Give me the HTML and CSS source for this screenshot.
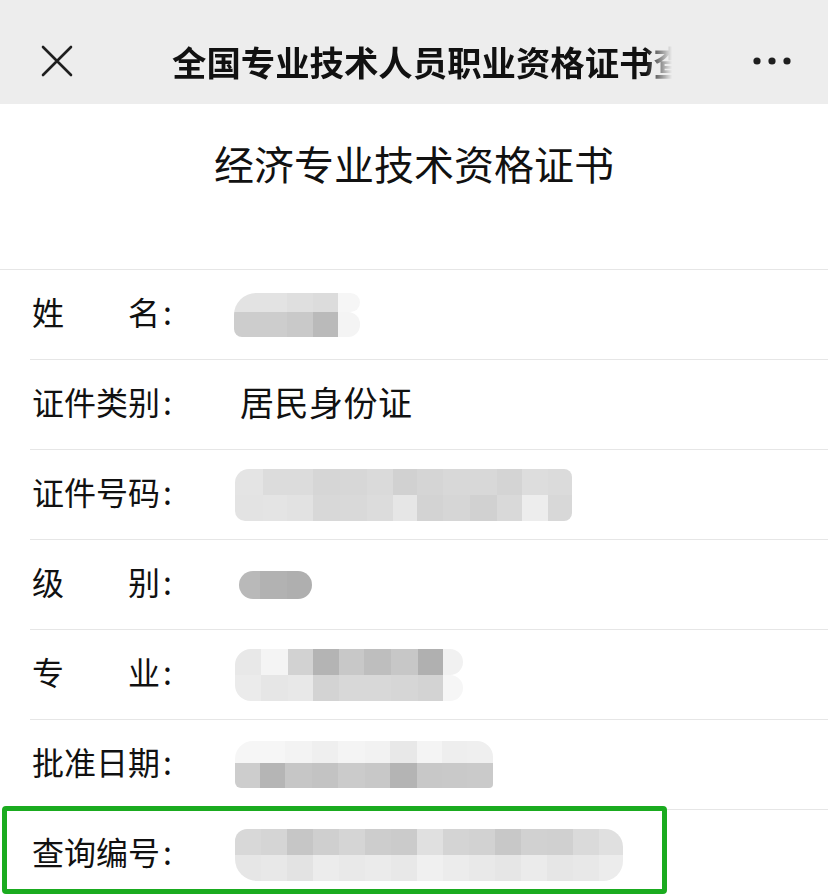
FILE: index.html
```html
<!DOCTYPE html>
<html lang="zh-CN">
<head>
<meta charset="utf-8">
<title>经济专业技术资格证书</title>
<link rel="stylesheet" href="styles.css">
</head>
<body>
<div class="page">
  <header class="topbar">
    <svg class="close" width="32" height="32" viewBox="0 0 32 32" aria-hidden="true">
      <path d="M2 2 L30 30 M30 2 L2 30" stroke="#1f1f1f" stroke-width="2.6" stroke-linecap="round" fill="none"/>
    </svg>
    <div class="title">全国专业技术人员职业资格证书查询</div>
    <svg class="more" width="38" height="10" viewBox="0 0 38 10" aria-hidden="true">
      <circle cx="4" cy="5" r="3.6" fill="#1f1f1f"/>
      <circle cx="19" cy="5" r="3.6" fill="#1f1f1f"/>
      <circle cx="34" cy="5" r="3.6" fill="#1f1f1f"/>
    </svg>
  </header>

  <h1 class="heading">经济专业技术资格证书</h1>

  <div class="list">
    <div class="row">
      <div class="label"><span class="name"><span>姓</span><span>名</span></span><span class="colon">:</span></div>
      <div class="blur blur-name">
        <div class="brow top"><i style="width:53px;background:#e3e3e3"></i><i style="width:26px;background:#dfdfdf"></i><i style="width:25px;background:#dcdcdc"></i><i class="fade" style="width:22px;background:#f6f6f6"></i></div>
        <div class="brow bot"><i style="width:53px;background:#cdcdcd"></i><i style="width:26px;background:#c9c9c9"></i><i style="width:25px;background:#bababa"></i><i class="fade" style="width:22px;background:#f4f4f4"></i></div>
      </div>
    </div>
    <div class="row">
      <div class="label"><span class="name"><span>证</span><span>件</span><span>类</span><span>别</span></span><span class="colon">:</span></div>
      <div class="value">居民身份证</div>
    </div>
    <div class="row">
      <div class="label"><span class="name"><span>证</span><span>件</span><span>号</span><span>码</span></span><span class="colon">:</span></div>
      <div class="blur blur-id">
        <div class="brow"><i style="width:28px;background:#e4e4e4"></i><i style="width:24px;background:#dcdcdc"></i><i style="width:26px;background:#dcdcdc"></i><i style="width:27px;background:#d6d6d6"></i><i style="width:27px;background:#d7d7d7"></i><i style="width:26px;background:#dadada"></i><i style="width:24px;background:#d1d1d1"></i><i style="width:26px;background:#d5d5d5"></i><i style="width:27px;background:#d8d8d8"></i><i style="width:27px;background:#d8d8d8"></i><i style="width:25px;background:#d4d4d4"></i><i style="width:26px;background:#dddddd"></i><i style="width:24px;background:#dbdbdb"></i></div>
        <div class="brow"><i style="width:28px;background:#e3e3e3"></i><i style="width:24px;background:#e4e4e4"></i><i style="width:26px;background:#e2e2e2"></i><i style="width:27px;background:#d8d8d8"></i><i style="width:27px;background:#d9d9d9"></i><i style="width:26px;background:#dcdcdc"></i><i style="width:24px;background:#e6e6e6"></i><i style="width:26px;background:#d3d3d3"></i><i style="width:27px;background:#d6d6d6"></i><i style="width:27px;background:#d1d1d1"></i><i style="width:25px;background:#d9d9d9"></i><i style="width:26px;background:#ededed"></i><i style="width:24px;background:#d8d8d8"></i></div>
      </div>
    </div>
    <div class="row">
      <div class="label"><span class="name"><span>级</span><span>别</span></span><span class="colon">:</span></div>
      <div class="blur blur-level">
        <div class="brow"><i style="width:21px;background:#b9b9b9"></i><i style="width:27px;background:#b2b2b2"></i><i style="width:25px;background:#afafaf"></i></div>
      </div>
    </div>
    <div class="row">
      <div class="label"><span class="name"><span>专</span><span>业</span></span><span class="colon">:</span></div>
      <div class="blur blur-major">
        <div class="brow"><i style="width:26px;background:#e8e8e8"></i><i style="width:27px;background:#f4f4f4"></i><i style="width:25px;background:#d2d2d2"></i><i style="width:26px;background:#b4b4b4"></i><i style="width:25px;background:#c8c8c8"></i><i style="width:27px;background:#bebebe"></i><i style="width:27px;background:#c7c7c7"></i><i style="width:25px;background:#b0b0b0"></i><i class="ext" style="width:20px;background:#f1f1f1"></i></div>
        <div class="brow"><i style="width:26px;background:#ebebeb"></i><i style="width:27px;background:#e6e6e6"></i><i style="width:25px;background:#e8e8e8"></i><i style="width:26px;background:#d3d3d3"></i><i style="width:25px;background:#d8d8d8"></i><i style="width:27px;background:#d8d8d8"></i><i style="width:27px;background:#d6d6d6"></i><i style="width:25px;background:#d3d3d3"></i><i class="ext" style="width:20px;background:#f6f6f6"></i></div>
      </div>
    </div>
    <div class="row">
      <div class="label"><span class="name"><span>批</span><span>准</span><span>日</span><span>期</span></span><span class="colon">:</span></div>
      <div class="blur blur-date">
        <div class="brow"><i style="width:25px;background:#f6f6f6"></i><i style="width:25px;background:#f6f6f6"></i><i style="width:27px;background:#f3f3f3"></i><i style="width:26px;background:#efefef"></i><i style="width:27px;background:#f4f4f4"></i><i style="width:25px;background:#f2f2f2"></i><i style="width:27px;background:#e8e8e8"></i><i style="width:25px;background:#f4f4f4"></i><i style="width:25px;background:#eeeeee"></i><i style="width:26px;background:#efefef"></i></div>
        <div class="brow"><i style="width:25px;background:#cdcdcd"></i><i style="width:25px;background:#b5b5b5"></i><i style="width:27px;background:#c6c6c6"></i><i style="width:26px;background:#c3c3c3"></i><i style="width:27px;background:#cbcbcb"></i><i style="width:25px;background:#c8c8c8"></i><i style="width:27px;background:#b4b4b4"></i><i style="width:25px;background:#c8c8c8"></i><i style="width:25px;background:#c9c9c9"></i><i style="width:26px;background:#cacaca"></i></div>
      </div>
    </div>
    <div class="row">
      <div class="label"><span class="name"><span>查</span><span>询</span><span>编</span><span>号</span></span><span class="colon">:</span></div>
      <div class="blur blur-query">
        <div class="brow"><i style="width:26px;background:#d8d8d8"></i><i style="width:26px;background:#d5d5d5"></i><i style="width:26px;background:#c6c6c6"></i><i style="width:26px;background:#cfcfcf"></i><i style="width:26px;background:#d5d5d5"></i><i style="width:26px;background:#cdcdcd"></i><i style="width:26px;background:#cbcbcb"></i><i style="width:26px;background:#e0e0e0"></i><i style="width:26px;background:#d4d4d4"></i><i style="width:26px;background:#d2d2d2"></i><i style="width:26px;background:#c8c8c8"></i><i style="width:26px;background:#d1d1d1"></i><i style="width:26px;background:#d0d0d0"></i><i style="width:26px;background:#dadada"></i><i style="width:24px;background:#e0e0e0"></i></div>
        <div class="brow"><i style="width:26px;background:#e6e6e6"></i><i style="width:26px;background:#e8e8e8"></i><i style="width:26px;background:#e3e3e3"></i><i style="width:26px;background:#ececec"></i><i style="width:26px;background:#e9e9e9"></i><i style="width:26px;background:#ebebeb"></i><i style="width:26px;background:#e8e8e8"></i><i style="width:26px;background:#f0f0f0"></i><i style="width:26px;background:#ececec"></i><i style="width:26px;background:#e9e9e9"></i><i style="width:26px;background:#e6e6e6"></i><i style="width:26px;background:#ebebeb"></i><i style="width:26px;background:#e6e6e6"></i><i style="width:26px;background:#e8e8e8"></i><i style="width:24px;background:#ececec"></i></div>
      </div>
    </div>
  </div>

  <div class="highlight"></div>
</div>
</body>
</html>
```

FILE: styles.css
```css
html, body {
  margin: 0;
  padding: 0;
  overflow: hidden;
  background: #ffffff;
}

body {
  font-family: "Noto Sans CJK SC", "Noto Sans", sans-serif;
  color: #111111;
}

.page {
  position: relative;
  width: 828px;
  height: 894px;
  overflow: hidden;
}

.topbar {
  height: 104px;
  box-sizing: border-box;
  padding-top: 17px;
  background: #ededed;
  display: flex;
  align-items: center;
}

.close {
  margin-left: 41px;
  flex: none;
}

.title {
  margin-left: 99px;
  width: 502px;
  flex: none;
  overflow: hidden;
  white-space: nowrap;
  font-size: 34.4px;
  font-weight: 700;
  line-height: 44px;
  color: #111111;
  -webkit-mask-image: linear-gradient(to right, #000 0, #000 474px, rgba(0,0,0,0) 500px);
  mask-image: linear-gradient(to right, #000 0, #000 474px, rgba(0,0,0,0) 500px);
}

.more {
  margin-left: auto;
  margin-right: 37px;
  flex: none;
}

.heading {
  margin: 0;
  height: 165px;
  padding-top: 33px;
  box-sizing: border-box;
  text-align: center;
  font-size: 40px;
  font-weight: 400;
  line-height: 52px;
  color: #111111;
}

.list {
  border-top: 1px solid #e6e6e6;
}

.row {
  margin-left: 30px;
  height: 89px;
  border-bottom: 1px solid #e6e6e6;
  display: flex;
  align-items: center;
  padding-left: 2px;
}

.label {
  width: 202px;
  flex: none;
  display: flex;
  align-items: center;
  font-size: 32px;
  line-height: 40px;
  margin-bottom: 7px;
}

.name {
  width: 128px;
  display: flex;
  justify-content: space-between;
}

.colon {
  margin-left: 3px;
}

.value {
  padding-left: 6px;
  font-size: 34px;
  line-height: 40px;
  letter-spacing: 0.5px;
  margin-bottom: 6px;
}

.blur {
  display: flex;
  flex-direction: column;
  overflow: hidden;
  filter: blur(0.6px);
}

.brow {
  display: flex;
  height: 25px;
}

.brow i {
  display: block;
  flex: none;
  height: 100%;
}

.blur-name {
  border-radius: 22px 0 0 8px;
}
.blur-name .top { height: 19px; }
.blur-name .fade { border-radius: 0 12px 12px 0; }

.blur-id {
  border-radius: 14px 8px 8px 10px;
  margin-left: 1px;
}
.blur-id .brow { height: 26px; }

.blur-level {
  margin-left: 5px;
  border-radius: 14px;
}
.blur-level .brow { height: 28px; }

.blur-major {
  margin-left: 1px;
  border-radius: 16px 0 0 16px;
}
.blur-major .brow { height: 26px; }
.blur-major .ext { border-radius: 0 20px 20px 0; }

.blur-date {
  margin-left: 1px;
  border-radius: 18px 16px 4px 6px;
}
.blur-date .brow:first-child { height: 22px; }

.blur-query {
  margin-left: 1px;
  border-radius: 12px 18px 20px 22px;
}
.blur-query .brow { height: 26px; }

.highlight {
  position: absolute;
  left: 2px;
  top: 806px;
  width: 665px;
  height: 88px;
  box-sizing: border-box;
  border: 5px solid #1aab1f;
  border-radius: 4px;
}
```
